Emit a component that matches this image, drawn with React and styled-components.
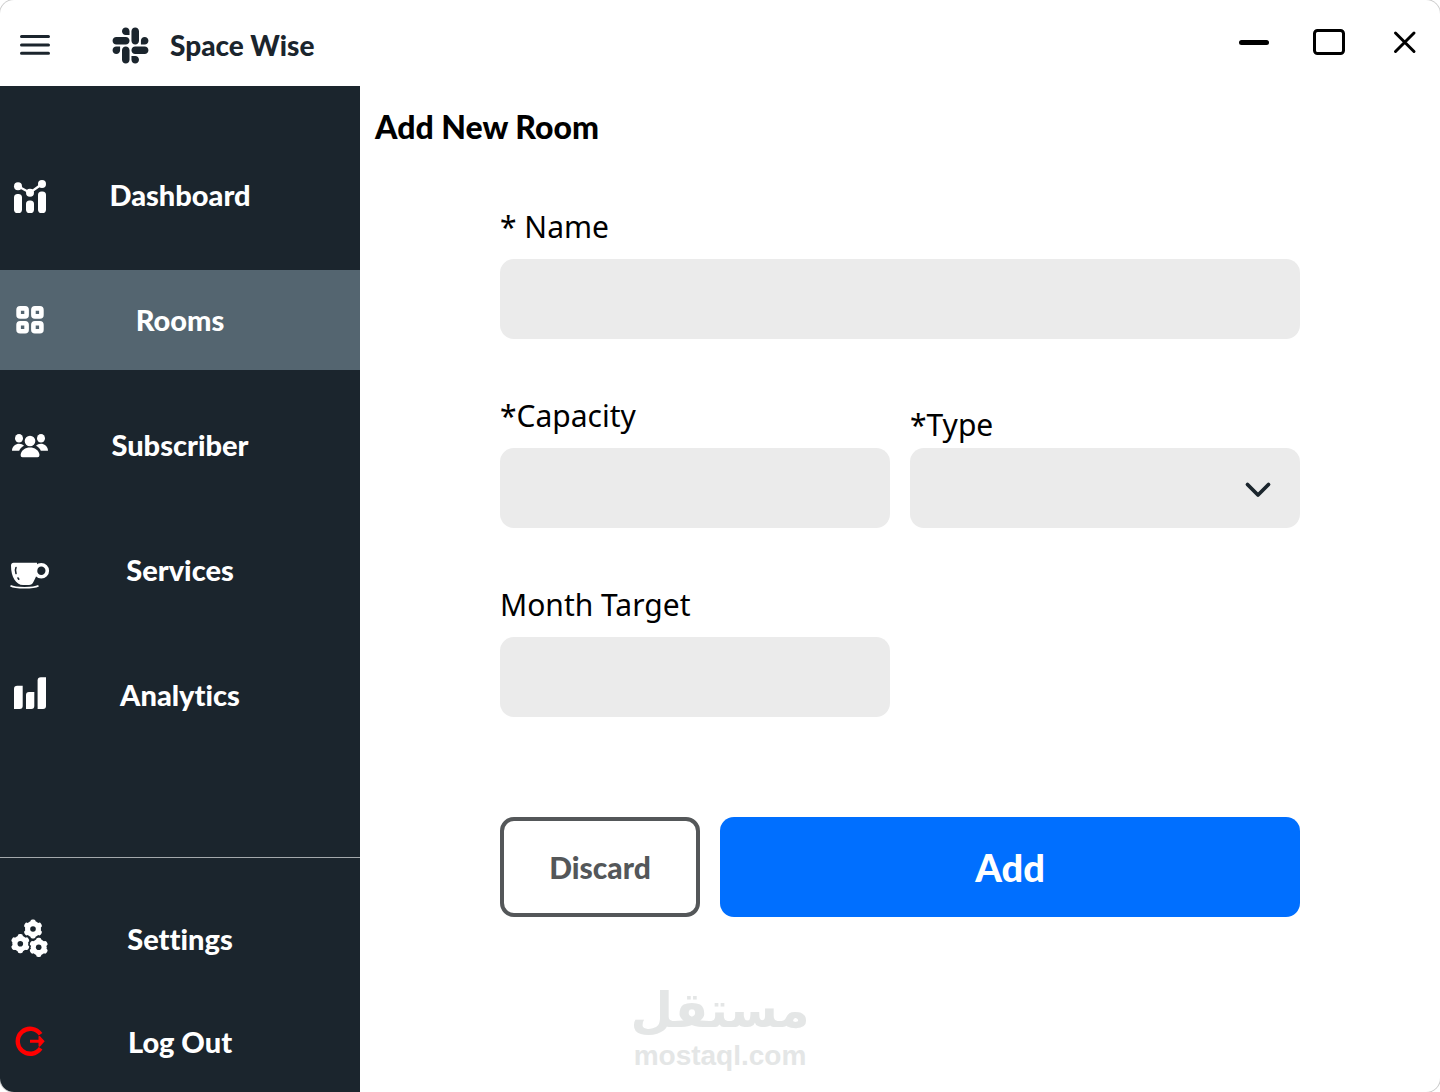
import React from 'react';
import styled, { createGlobalStyle } from 'styled-components';
import { FaSlack } from 'react-icons/fa';

const theme = {
  dark: '#1b252d',
  active: '#546570',
  field: '#ebebeb',
  primary: '#006fff',
  muted: '#545759',
  danger: '#ff0000',
  watermark: '#e4e6e6',
};

const displayFont = "Lato, 'Open Sans', sans-serif";
const textFont = "'Noto Sans', 'Open Sans', sans-serif";

const GlobalStyle = createGlobalStyle`
  * { box-sizing: border-box; }
  body {
    margin: 0;
    background-color: #fff;
    font-family: ${textFont};
  }
  button, input, select { font: inherit; }
`;

const Window = styled.div`
  position: relative;
  display: flex;
  flex-direction: column;
  min-height: 100vh;
  border-radius: 14px;
  box-shadow: 0 0 0 1px #ccc;
  background-color: #fff;
  overflow: hidden;
`;

const TitleBar = styled.header`
  display: flex;
  align-items: center;
  height: 86px;
  padding: 4px 19px 0 19px;
`;

const IconButton = styled.button`
  display: flex;
  align-items: center;
  justify-content: center;
  width: 32px;
  height: 32px;
  padding: 0;
  border: 0;
  background: none;
  color: ${({ $color }) => $color || '#000'};
  cursor: pointer;
`;

const Brand = styled.div`
  display: flex;
  align-items: center;
  gap: 19px;
  margin-left: 59px;
  color: ${theme.dark};
  font-family: ${displayFont};
  font-size: 28px;
  font-weight: 900;
`;

const WindowControls = styled.div`
  display: flex;
  gap: 44px;
  margin-left: auto;
  padding-bottom: 6px;
`;

const Body = styled.div`
  display: flex;
  flex: 1;
`;

const Sidebar = styled.nav`
  display: flex;
  flex-direction: column;
  flex: 0 0 360px;
  background-color: ${theme.dark};
`;

const NavGroup = styled.div`
  display: flex;
  flex-direction: column;
  gap: 25px;
  padding-top: 59px;
`;

const NavFooter = styled.div`
  display: flex;
  flex-direction: column;
  gap: 3px;
  margin-top: auto;
  padding-top: 31px;
  border-top: 1px solid #a4a9ac;
`;

const NavItem = styled.a`
  display: grid;
  grid-template-columns: 60px 1fr 60px;
  align-items: center;
  justify-items: center;
  height: 100px;
  background-color: ${({ $active }) => ($active ? theme.active : 'transparent')};
  color: #fff;
  font-family: ${displayFont};
  font-size: 29px;
  font-weight: 900;
  line-height: 34px;
  font-variant-ligatures: none;
  text-decoration: none;
`;

const Content = styled.main`
  flex: 1;
  padding: 19px 15px 0;
`;

const PageTitle = styled.h1`
  margin: 0;
  font-family: ${displayFont};
  font-size: 32px;
  font-weight: 900;
  line-height: 44px;
`;

const Form = styled.form`
  display: grid;
  grid-template-columns: 1fr 1fr;
  align-items: end;
  gap: 55px 20px;
  margin: 56px 125px 0;
`;

const Field = styled.div`
  display: flex;
  flex-direction: column;
  gap: ${({ $tight }) => ($tight ? '1px' : '10px')};
  grid-column: ${({ $wide }) => ($wide ? '1 / -1' : 'auto')};
`;

const Label = styled.label`
  font-size: 30px;
  line-height: 44px;
`;

const Input = styled.input`
  width: 100%;
  height: 80px;
  padding: 0 20px;
  border: 0;
  border-radius: 14px;
  background-color: ${theme.field};
  font-size: 30px;
`;

const SelectWrap = styled.div`
  position: relative;

  & > svg {
    position: absolute;
    top: 28px;
    right: 26px;
    pointer-events: none;
  }
`;

const Select = styled(Input).attrs({ as: 'select' })`
  display: block;
  appearance: none;
`;

const Actions = styled.div`
  grid-column: 1 / -1;
  display: grid;
  grid-template-columns: 200px 1fr;
  gap: 20px;
  margin-top: 45px;
`;

const Button = styled.button`
  height: 100px;
  border: ${({ $primary }) => ($primary ? '0' : `4px solid ${theme.muted}`)};
  border-radius: 14px;
  background-color: ${({ $primary }) => ($primary ? theme.primary : '#fff')};
  color: ${({ $primary }) => ($primary ? '#fff' : theme.muted)};
  font-family: ${displayFont};
  font-size: ${({ $primary }) => ($primary ? '38px' : '30px')};
  font-weight: 900;
  cursor: pointer;
`;

/* Sits above the page, centred on the window */
const Watermark = styled.div`
  position: absolute;
  right: 0;
  bottom: 20px;
  left: 0;
  display: flex;
  flex-direction: column;
  align-items: center;
  color: ${theme.watermark};
  font-weight: bold;
  pointer-events: none;
`;

const WatermarkArabic = styled.span`
  font-family: 'DejaVu Sans', sans-serif;
  font-size: 49px;
  line-height: 58px;
`;

const WatermarkLatin = styled.span`
  font-family: 'Liberation Sans', sans-serif;
  font-size: 28px;
  line-height: 32px;
`;

const NavIcon = ({ children, box = '-2 -2 40 40' }) => (
  <svg width="40" height="40" viewBox={box} fill="currentColor" aria-hidden="true">
    {children}
  </svg>
);

const DashboardIcon = () => (
  <NavIcon>
    <path d="M6 9.3 18 15.7 30 7" fill="none" stroke="currentColor" strokeWidth="2.4" />
    <circle cx="6" cy="9.3" r="4" />
    <circle cx="18" cy="15.7" r="4" />
    <circle cx="30" cy="7" r="4" />
    <rect x="2" y="17" width="8" height="19" rx="3.6" />
    <rect x="14" y="23.5" width="8" height="12.5" rx="3.6" />
    <rect x="26" y="14.5" width="8" height="21.5" rx="3.6" />
  </NavIcon>
);

const RoomsIcon = () => (
  <NavIcon>
    <g fill="none" stroke="currentColor" strokeWidth="4.6">
      <rect x="6.6" y="6.4" width="8" height="8" rx="1.5" />
      <rect x="21.4" y="6.4" width="8" height="8" rx="1.5" />
      <rect x="6.6" y="21.2" width="8" height="8" rx="1.5" />
      <rect x="21.4" y="21.2" width="8" height="8" rx="1.5" />
    </g>
  </NavIcon>
);

const SubscriberIcon = () => (
  <NavIcon>
    <ellipse cx="7" cy="11.3" rx="4" ry="4.3" />
    <ellipse cx="29" cy="11.3" rx="4" ry="4.3" />
    <circle cx="18" cy="14" r="5.3" />
    <path d="M0 23.8C0 19 4 16.8 7 16.8c2 0 4 .8 5 2-2.5 1.2-4 3-4.8 5Z" />
    <path d="M36 23.8c0-4.8-4-7-7-7-2 0-4 .8-5 2 2.5 1.2 4 3 4.8 5Z" />
    <path d="M8.6 28C9 23 13.5 20.5 18 20.5S27 23 27.5 28q0 2.3-2 2.3h-15q-2 0-1.9-2.3Z" />
  </NavIcon>
);

const ServicesIcon = () => (
  <NavIcon box="0 0 40 40">
    <path d="M1 15.5q.2-2.8 2.5-2.8H27c1 8 0 13-3.5 19Q22 35 19 35h-6C6 35 1 27 1 15.5Z" />
    <circle cx="31.3" cy="20.8" r="6" fill="none" stroke="currentColor" strokeWidth="3.6" />
    <path d="M.5 35.7c3 1.6 8 2 14 2s11-.4 14-2" fill="none" stroke="currentColor" strokeWidth="1.6" />
    <path
      d="M6 17.5q-1.300 2.800 0 6M8 28l.8 1.200"
      fill="none"
      stroke={theme.dark}
      strokeWidth="1.6"
      strokeLinecap="round"
    />
  </NavIcon>
);

const AnalyticsIcon = () => (
  <NavIcon>
    <path d="M2 12q0-3.300 3.300-3.300h5.400V29q0 3-3 3H2Z" />
    <path d="M14 18q0-3 3-3h5.300v14q0 3-3 3H14Z" />
    <path d="M25.6 3.5q0-3.300 3.300-3.300H34V29q0 3-3 3h-5.400Z" />
  </NavIcon>
);

const Gear = ({ x, y }) => (
  <g transform={`translate(${x} ${y})`}>
    <circle r="8" />
    {[0, 60, 120].map((angle) => (
      <rect key={angle} x="-2.6" y="-9.6" width="5.2" height="19.2" rx="2" transform={`rotate(${angle})`} />
    ))}
    <circle r="2.8" fill={theme.dark} />
  </g>
);

const SettingsIcon = () => (
  <NavIcon box="0 0 40 40">
    <Gear x={23} y={10} />
    <Gear x={10.3} y={24.7} />
    <Gear x={28.7} y={28.3} />
  </NavIcon>
);

const LogOutIcon = () => (
  <NavIcon>
    <g fill={theme.danger}>
      <path d="M28.6 10.300a12.5 12.5 0 1 0 0 14" fill="none" stroke={theme.danger} strokeWidth="4.4" />
      <path d="M18 15.8h8.5V13q0-2 1.800-.6l4.400 4.900-4.400 4.900q-1.800 1.400-1.800-.6v-2.800H18Z" />
    </g>
  </NavIcon>
);

const navItems = [
  { label: 'Dashboard', Icon: DashboardIcon },
  { label: 'Rooms', Icon: RoomsIcon, active: true },
  { label: 'Subscriber', Icon: SubscriberIcon },
  { label: 'Services', Icon: ServicesIcon },
  { label: 'Analytics', Icon: AnalyticsIcon },
];

const footerItems = [
  { label: 'Settings', Icon: SettingsIcon },
  { label: 'Log Out', Icon: LogOutIcon },
];

const renderItem = ({ label, Icon, active }) => (
  <NavItem key={label} href="#" $active={active} aria-current={active ? 'page' : undefined}>
    <Icon />
    <span>{label}</span>
  </NavItem>
);

export default function App() {
  return (
    <>
      <GlobalStyle />
      <Window>
        <TitleBar>
          <IconButton type="button" aria-label="Menu" $color={theme.dark}>
            <svg width="32" height="32" viewBox="0 0 32 32" stroke="currentColor" strokeWidth="3" strokeLinecap="round">
              <path d="M2.5 7.5h27M2.5 16h27M2.5 24.3h27" />
            </svg>
          </IconButton>
          <Brand>
            <FaSlack size={41} />
            <span>Space Wise</span>
          </Brand>
          <WindowControls>
            <IconButton type="button" aria-label="Minimize">
              <svg width="32" height="32" viewBox="0 0 32 32" stroke="currentColor" strokeWidth="5" strokeLinecap="round">
                <path d="M4.5 16.5h25" />
              </svg>
            </IconButton>
            <IconButton type="button" aria-label="Maximize">
              <svg width="32" height="32" viewBox="0 0 32 32" fill="none" stroke="currentColor" strokeWidth="3">
                <rect x="1.5" y="4.5" width="29" height="23" rx="3" />
              </svg>
            </IconButton>
            <IconButton type="button" aria-label="Close">
              <svg width="32" height="32" viewBox="0 0 32 32" stroke="currentColor" strokeWidth="3" strokeLinecap="round">
                <path d="M6.5 7 25 25.5M25 7 6.5 25.5" />
              </svg>
            </IconButton>
          </WindowControls>
        </TitleBar>

        <Body>
          <Sidebar>
            <NavGroup>{navItems.map(renderItem)}</NavGroup>
            <NavFooter>{footerItems.map(renderItem)}</NavFooter>
          </Sidebar>

          <Content>
            <PageTitle>Add New Room</PageTitle>
            <Form onSubmit={(e) => e.preventDefault()}>
              <Field $wide>
                <Label htmlFor="name">* Name</Label>
                <Input id="name" type="text" />
              </Field>
              <Field>
                <Label htmlFor="capacity">*Capacity</Label>
                <Input id="capacity" type="text" inputMode="numeric" />
              </Field>
              <Field $tight>
                <Label htmlFor="type">*Type</Label>
                <SelectWrap>
                  <Select id="type" defaultValue="">
                    <option value="" />
                  </Select>
                  <svg width="32" height="28" viewBox="0 0 32 28" fill="none" stroke={theme.dark} strokeWidth="3.8" strokeLinecap="round" strokeLinejoin="round">
                    <path d="M5.5 8.5 16 19 26.5 8.5" />
                  </svg>
                </SelectWrap>
              </Field>
              <Field>
                <Label htmlFor="target">Month Target</Label>
                <Input id="target" type="text" inputMode="numeric" />
              </Field>
              <Actions>
                <Button type="button">Discard</Button>
                <Button type="submit" $primary>Add</Button>
              </Actions>
            </Form>
          </Content>
        </Body>

        <Watermark>
          <WatermarkArabic lang="ar" dir="rtl">مستقل</WatermarkArabic>
          <WatermarkLatin>mostaql.com</WatermarkLatin>
        </Watermark>
      </Window>
    </>
  );
}
